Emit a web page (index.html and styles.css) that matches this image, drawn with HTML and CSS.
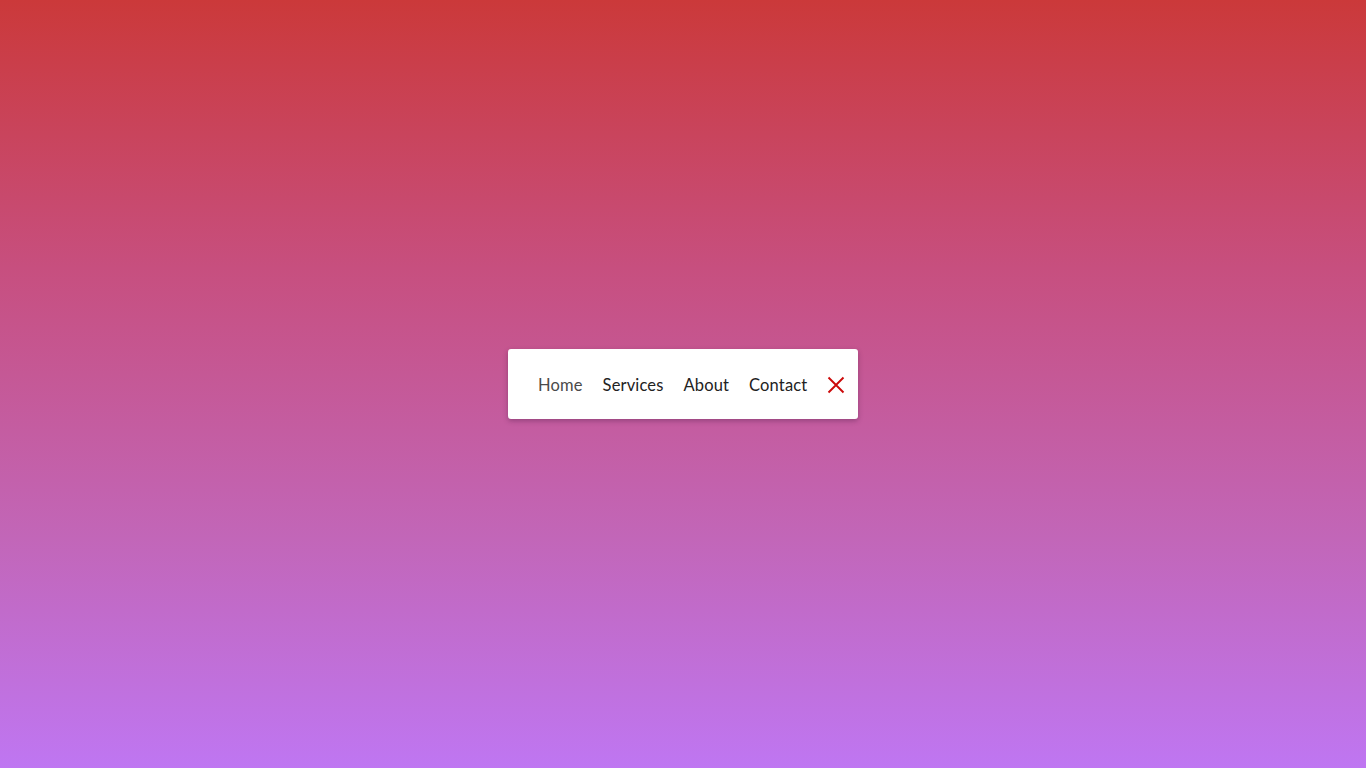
FILE: index.html
```html
<!DOCTYPE html>
<html lang="en">
<head>
<meta charset="utf-8">
<title>Menu</title>
<link rel="stylesheet" href="styles.css">
</head>
<body>
<nav class="menu">
  <ul class="menu-list">
    <li><a class="menu-link menu-link--muted" href="#">Home</a></li>
    <li><a class="menu-link" href="#">Services</a></li>
    <li><a class="menu-link" href="#">About</a></li>
    <li><a class="menu-link" href="#">Contact</a></li>
  </ul>
  <button class="menu-close" aria-label="Close">
    <svg width="18" height="18" viewBox="0 0 18 18"><path d="M1.5 1.5L16.5 16.5M16.5 1.5L1.5 16.5" stroke="#cc0a0a" stroke-width="1.9" fill="none"/></svg>
  </button>
</nav>
</body>
</html>
```

FILE: styles.css
```css
html, body {
  margin: 0;
  height: 100%;
}
body {
  background: linear-gradient(to bottom, #cb393a 0%, #c74f7f 35%, #c266b8 70%, #bf76f2 100%);
  display: flex;
  align-items: center;
  justify-content: center;
  font-family: "Lato", "Open Sans", sans-serif;
}
.menu {
  width: 350px;
  height: 70px;
  box-sizing: border-box;
  background: #fff;
  border-radius: 3px;
  box-shadow: 0 2px 5px rgba(60, 20, 60, 0.35);
  display: flex;
  align-items: center;
  padding: 1px 13px 0 30px;
}
.menu-list {
  list-style: none;
  margin: 0;
  padding: 0;
  display: flex;
  gap: 20px;
  flex: 1;
}
.menu-link {
  text-decoration: none;
  color: #222;
  font-size: 16.5px;
  letter-spacing: 0.15px;
}
.menu-link--muted {
  color: #4a4a4a;
}
.menu-close {
  border: 0;
  background: none;
  padding: 0;
  width: 18px;
  height: 18px;
  display: flex;
  cursor: pointer;
}
```
